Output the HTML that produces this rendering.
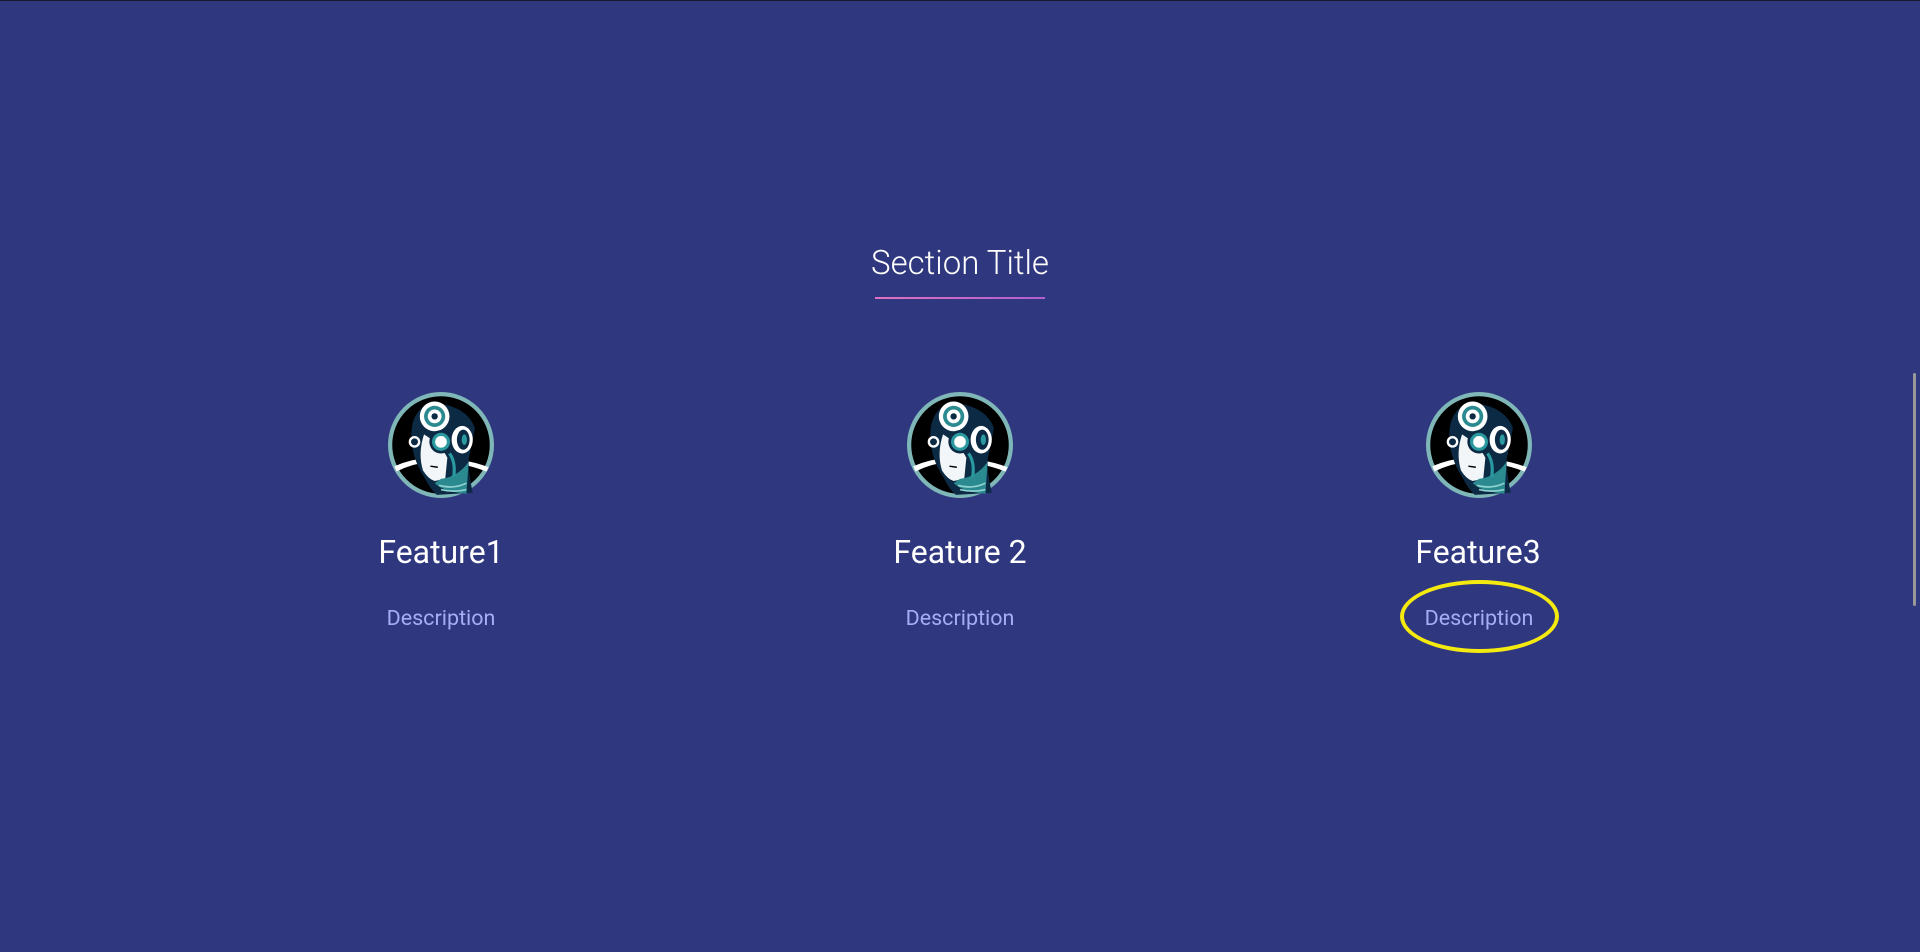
<!DOCTYPE html>
<html><head><meta charset="utf-8"><style>
html,body{margin:0;padding:0;width:1920px;height:952px;overflow:hidden;background:#2f377f;font-family:"Roboto","Liberation Sans",sans-serif;}
.top{position:absolute;left:0;top:0;width:1920px;height:1px;background:#1a1a2a}
.title{position:absolute;left:0;width:1920px;top:244px;text-align:center;color:#fff;font-size:33px;font-weight:300;line-height:40px}
.ul{position:absolute;left:875px;top:297px;width:170px;height:2px;background:linear-gradient(90deg,#e070c0,#b060d0)}
.ic{position:absolute;top:392px;width:106px;height:106px}
.ft{position:absolute;top:532px;width:400px;text-align:center;color:#fff;font-size:32px;line-height:40px}
.ds{position:absolute;top:605px;width:400px;text-align:center;color:#a4aef5;font-size:21.5px;line-height:28px}
.ell{position:absolute;left:1400px;top:580px;width:151px;height:65px;border:4px solid #f5ea10;border-radius:50%}
.sb{position:absolute;left:1913px;top:373px;width:3px;height:233px;background:#999;border-radius:2px}
</style></head><body>
<div class="top"></div>
<div class="title">Section Title</div>
<div class="ul"></div>

<svg width="0" height="0" style="position:absolute"><defs>
<symbol id="av" viewBox="0 0 100 100">
<circle cx="50" cy="50" r="48" fill="#000" stroke="#7fb6b8" stroke-width="4"/>
<path d="M6 70 Q22 63 40 62 L40 66 Q24 67 8 75Z" fill="#fff"/>
<path d="M68 64 Q82 66 95 71 L93 75 Q80 70 68 68Z" fill="#fff"/>
<path d="M40 10 Q22 18 22 40 Q22 62 34 80 Q40 92 46 97 L80 95 Q76 78 76 64 L82 34 Q74 12 40 10Z" fill="#0c2a44"/>
<path d="M34 40 Q28 58 33 74 Q38 82 44 84 L54 82 L56 62 Q50 50 34 40Z" fill="#f2f6f8"/>
<path d="M40 70 L47 71" stroke="#000" stroke-width="1.4"/>
<path d="M44 86 Q52 94 74 96 L76 66 Q66 80 50 82Z" fill="#2a8a90"/>
<path d="M48 88 Q62 92 74 86 M50 92 Q62 95 74 92" stroke="#8fd0d0" stroke-width="1.6" fill="none"/>
<path d="M58 58 Q64 66 62 80" stroke="#2a9aa0" stroke-width="3" fill="none"/>
<circle cx="44" cy="23" r="14" fill="#fff"/><circle cx="44" cy="23" r="10" fill="#2a8a90"/><circle cx="44" cy="23" r="6.5" fill="#fff"/><circle cx="44" cy="23" r="3" fill="#0c2a44"/>
<circle cx="50" cy="47" r="11" fill="#0c2a44"/><circle cx="50" cy="47" r="8.5" fill="#2a9aa0"/><circle cx="50" cy="47" r="5.5" fill="#fff"/>
<ellipse cx="70" cy="45" rx="10" ry="13" fill="#fff"/><ellipse cx="71" cy="45" rx="6" ry="9.5" fill="#0c2a44"/><ellipse cx="72" cy="45" rx="2.5" ry="5" fill="#2a9aa0"/>
<circle cx="25" cy="47" r="5.5" fill="#fff"/><circle cx="25" cy="47" r="3.3" fill="#0c2a44"/>
</symbol></defs></svg>

<svg class="ic" style="left:388px" viewBox="0 0 100 100"><use href="#av"/></svg>
<svg class="ic" style="left:907px" viewBox="0 0 100 100"><use href="#av"/></svg>
<svg class="ic" style="left:1426px" viewBox="0 0 100 100"><use href="#av"/></svg>

<div class="ft" style="left:241px">Feature1</div>
<div class="ft" style="left:760px">Feature 2</div>
<div class="ft" style="left:1278px">Feature3</div>
<div class="ds" style="left:241px">Description</div>
<div class="ds" style="left:760px">Description</div>
<div class="ds" style="left:1279px">Description</div>
<div class="ell"></div>
<div class="sb"></div>
</body></html>
